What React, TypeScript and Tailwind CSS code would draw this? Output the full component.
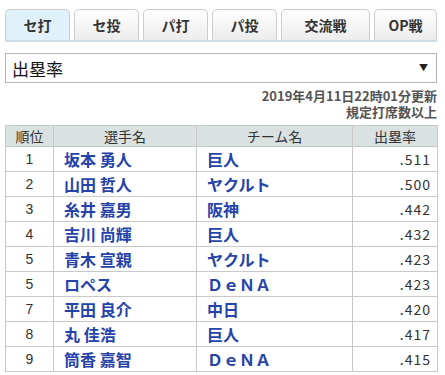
const tabs = [
  { label: 'セ打', w: 'w-[65px]', active: true },
  { label: 'セ投', w: 'w-[65px]' },
  { label: 'パ打', w: 'w-[65px]' },
  { label: 'パ投', w: 'w-[65px]' },
  { label: '交流戦', w: 'w-[89px]' },
  { label: 'OP戦', w: 'w-[63px]' },
];

const rows = [
  ['1', '坂本 勇人', '巨人', '.511'],
  ['2', '山田 哲人', 'ヤクルト', '.500'],
  ['3', '糸井 嘉男', '阪神', '.442'],
  ['4', '吉川 尚輝', '巨人', '.432'],
  ['5', '青木 宣親', 'ヤクルト', '.423'],
  ['5', 'ロペス', 'ＤｅＮＡ', '.423'],
  ['7', '平田 良介', '中日', '.420'],
  ['8', '丸 佳浩', '巨人', '.417'],
  ['9', '筒香 嘉智', 'ＤｅＮＡ', '.415'],
];

export default function App() {
  return (
    <div className="w-[445px] h-[375px] overflow-hidden bg-white pl-[5px] pt-[9px] font-['Noto_Sans_CJK_JP',sans-serif] text-[#333]">
      <div className="w-[432px]">
        {/* tabs */}
        <div className="flex gap-[4px] border-b-2 border-[#cfdde5]">
          {tabs.map((t) => (
            <div
              key={t.label}
              className={`${t.w} h-[31px] flex items-center justify-center rounded-t-[5px] border border-b-0 border-[#cccccc] text-[14px] font-bold leading-none ${
                t.active ? 'bg-[#e1f1f9]' : 'bg-gradient-to-b from-white to-[#ececec]'
              }`}
            >
              {t.label}
            </div>
          ))}
        </div>

        {/* select */}
        <div className="mt-[11px] h-[30px] flex items-center justify-between border border-[#b5b5b5] pl-[6px] pr-[8px]">
          <span className="text-[17px] leading-none text-[#111]">出塁率</span>
          <span className="text-[9px] text-[#222]">▼</span>
        </div>

        {/* update info */}
        <div className="mt-[5px] flex flex-col items-end text-[13px] font-bold text-[#555]">
          <div className="h-[16px] leading-[16px]">2019年4月11日22時01分更新</div>
          <div className="h-[16px] leading-[16px]">規定打席数以上</div>
        </div>

        {/* table */}
        <table className="mt-[5px] w-[432px] border-collapse table-fixed">
          <colgroup>
            <col className="w-[48px]" />
            <col className="w-[143px]" />
            <col className="w-[156px]" />
            <col className="w-[85px]" />
          </colgroup>
          <thead>
            <tr className="h-[21px] bg-[#d9e1e1] text-[14px] font-normal leading-none">
              <th className="border border-[#c8c8c8] font-normal">順位</th>
              <th className="border border-[#c8c8c8] font-normal">選手名</th>
              <th className="border border-[#c8c8c8] font-normal">チーム名</th>
              <th className="border border-[#c8c8c8] font-normal">出塁率</th>
            </tr>
          </thead>
          <tbody>
            {rows.map((r, i) => (
              <tr key={i} className="h-[25px] leading-none">
                <td className="border border-[#c8c8c8] text-center text-[14px] font-['Liberation_Sans_Narrow','Liberation_Sans',sans-serif]">{r[0]}</td>
                <td className="border border-[#c8c8c8] pl-[10px] text-[16px] font-bold text-[#2543a8] whitespace-nowrap">{r[1]}</td>
                <td className="border border-[#c8c8c8] pl-[10px] text-[16px] font-bold text-[#2543a8] whitespace-nowrap">{r[2]}</td>
                <td className="border border-[#c8c8c8] pr-[6px] text-right text-[14px] tracking-[1px]">{r[3]}</td>
              </tr>
            ))}
          </tbody>
        </table>
      </div>
    </div>
  );
}
